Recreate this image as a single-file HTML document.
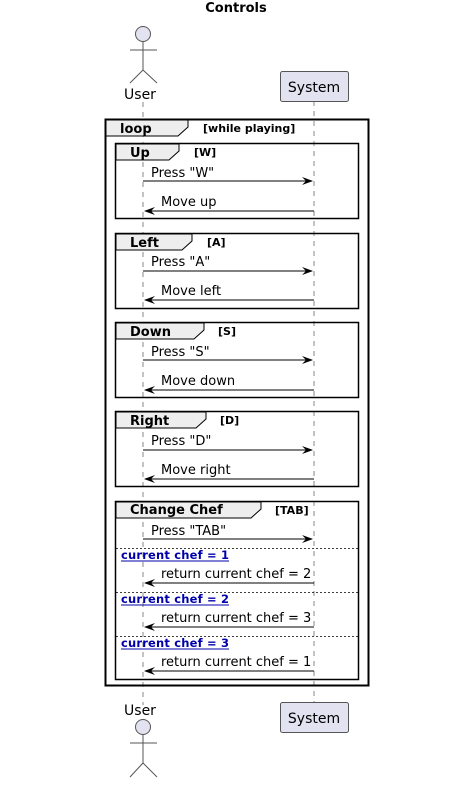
<!DOCTYPE html>
<html><head><meta charset="utf-8"><style>html,body{margin:0;padding:0;background:#fff}svg{display:block}</style></head><body>
<svg width="449" height="785" viewBox="0 0 449 785" xmlns="http://www.w3.org/2000/svg" font-family="'DejaVu Sans', 'Liberation Sans', sans-serif">
<rect width="449" height="785" fill="#fff"/>
<text x="236" y="12" text-anchor="middle" font-weight="bold" font-size="13">Controls</text>
<line x1="143" y1="102" x2="143" y2="705" stroke="#555" stroke-dasharray="5,5" stroke-width="0.7"/>
<line x1="314" y1="101" x2="314" y2="702" stroke="#555" stroke-dasharray="5,5" stroke-width="0.7"/>
<g stroke="#555" fill="none" stroke-width="1">
<circle cx="143" cy="34" r="7.5" fill="#E2E2F0"/>
<line x1="143" y1="42" x2="143" y2="70"/><line x1="130" y1="50" x2="157" y2="50"/>
<line x1="143" y1="70" x2="130" y2="83"/><line x1="143" y1="70" x2="157" y2="83"/>
</g>
<text x="140" y="99" text-anchor="middle" font-size="14">User</text>
<rect x="280.5" y="71.5" width="68" height="30" rx="2" fill="#E2E2F0" stroke="#555"/>
<text x="314" y="92" text-anchor="middle" font-size="14">System</text>
<rect x="105.5" y="119.5" width="263" height="566" fill="none" stroke="#000" stroke-width="2"/>
<polygon points="106,120 188,120 188,127 178,136 106,136" fill="#EEE" stroke="#000" stroke-width="1"/>
<text x="120" y="133" font-weight="bold" font-size="13">loop</text>
<text x="203" y="132" font-weight="bold" font-size="11">[while playing]</text>
<g>
<rect x="115.5" y="143.5" width="243" height="75" fill="none" stroke="#000" stroke-width="1.5"/>
<polygon points="116,144 179,144 179,151 169,160 116,160" fill="#EEE" stroke="#000"/>
<text x="130" y="157" font-weight="bold" font-size="13">Up</text>
<text x="194" y="156" font-weight="bold" font-size="11">[W]</text>
<text x="151" y="177" font-size="13">Press "W"</text>
<line x1="143" y1="181" x2="312" y2="181" stroke="#000"/><path d="M302,177 L313,181 L302,185 L306,181Z" fill="#000"/>
<text x="161" y="206" font-size="13">Move up</text>
<line x1="145" y1="211" x2="314" y2="211" stroke="#000"/><path d="M155,207 L144,211 L155,215 L151,211Z" fill="#000"/>
</g>
<g>
<rect x="115.5" y="233.5" width="243" height="75" fill="none" stroke="#000" stroke-width="1.5"/>
<polygon points="116,234 192,234 192,241 182,250 116,250" fill="#EEE" stroke="#000"/>
<text x="130" y="247" font-weight="bold" font-size="13">Left</text>
<text x="207" y="246" font-weight="bold" font-size="11">[A]</text>
<text x="151" y="266" font-size="13">Press "A"</text>
<line x1="143" y1="271" x2="312" y2="271" stroke="#000"/><path d="M302,267 L313,271 L302,275 L306,271Z" fill="#000"/>
<text x="161" y="295" font-size="13">Move left</text>
<line x1="145" y1="300" x2="314" y2="300" stroke="#000"/><path d="M155,296 L144,300 L155,304 L151,300Z" fill="#000"/>
</g>
<g>
<rect x="115.5" y="322.5" width="243" height="75" fill="none" stroke="#000" stroke-width="1.5"/>
<polygon points="116,323 204,323 204,330 194,339 116,339" fill="#EEE" stroke="#000"/>
<text x="130" y="336" font-weight="bold" font-size="13">Down</text>
<text x="218" y="335" font-weight="bold" font-size="11">[S]</text>
<text x="151" y="356" font-size="13">Press "S"</text>
<line x1="143" y1="360" x2="312" y2="360" stroke="#000"/><path d="M302,356 L313,360 L302,364 L306,360Z" fill="#000"/>
<text x="161" y="385" font-size="13">Move down</text>
<line x1="145" y1="390" x2="314" y2="390" stroke="#000"/><path d="M155,386 L144,390 L155,394 L151,390Z" fill="#000"/>
</g>
<g>
<rect x="115.5" y="411.5" width="243" height="75" fill="none" stroke="#000" stroke-width="1.5"/>
<polygon points="116,412 206,412 206,419 196,428 116,428" fill="#EEE" stroke="#000"/>
<text x="130" y="425" font-weight="bold" font-size="13">Right</text>
<text x="220" y="424" font-weight="bold" font-size="11">[D]</text>
<text x="151" y="445" font-size="13">Press "D"</text>
<line x1="143" y1="450" x2="312" y2="450" stroke="#000"/><path d="M302,446 L313,450 L302,454 L306,450Z" fill="#000"/>
<text x="161" y="474" font-size="13">Move right</text>
<line x1="145" y1="479" x2="314" y2="479" stroke="#000"/><path d="M155,475 L144,479 L155,483 L151,479Z" fill="#000"/>
</g>
<g>
<rect x="115.5" y="501.5" width="243" height="178" fill="none" stroke="#000" stroke-width="1.5"/>
<polygon points="116,502 261,502 261,509 251,518 116,518" fill="#EEE" stroke="#000"/>
<text x="130" y="514" font-weight="bold" font-size="13">Change Chef</text>
<text x="275" y="514" font-weight="bold" font-size="11">[TAB]</text>
<text x="151" y="535" font-size="13">Press "TAB"</text>
<line x1="143" y1="539" x2="312" y2="539" stroke="#000"/><path d="M302,535 L313,539 L302,543 L306,539Z" fill="#000"/>
<line x1="116" y1="548.5" x2="358" y2="548.5" stroke="#000" stroke-dasharray="2,2" stroke-width="0.8"/>
<text x="121" y="559" font-weight="bold" font-size="11.5" fill="#0000AA" textLength="108">current chef = 1</text>
<line x1="121" y1="561" x2="229" y2="561" stroke="#0000AA"/>
<text x="161" y="578" font-size="13">return current chef = 2</text>
<line x1="145" y1="583" x2="314" y2="583" stroke="#000"/><path d="M155,579 L144,583 L155,587 L151,583Z" fill="#000"/>
<line x1="116" y1="592.5" x2="358" y2="592.5" stroke="#000" stroke-dasharray="2,2" stroke-width="0.8"/>
<text x="121" y="603" font-weight="bold" font-size="11.5" fill="#0000AA" textLength="108">current chef = 2</text>
<line x1="121" y1="605" x2="229" y2="605" stroke="#0000AA"/>
<text x="161" y="622" font-size="13">return current chef = 3</text>
<line x1="145" y1="627" x2="314" y2="627" stroke="#000"/><path d="M155,623 L144,627 L155,631 L151,627Z" fill="#000"/>
<line x1="116" y1="636.5" x2="358" y2="636.5" stroke="#000" stroke-dasharray="2,2" stroke-width="0.8"/>
<text x="121" y="647" font-weight="bold" font-size="11.5" fill="#0000AA" textLength="108">current chef = 3</text>
<line x1="121" y1="649" x2="229" y2="649" stroke="#0000AA"/>
<text x="161" y="666" font-size="13">return current chef = 1</text>
<line x1="145" y1="671" x2="314" y2="671" stroke="#000"/><path d="M155,667 L144,671 L155,675 L151,671Z" fill="#000"/>
</g>
<text x="140" y="715" text-anchor="middle" font-size="14">User</text>
<g stroke="#555" fill="none" stroke-width="1">
<circle cx="143" cy="727" r="7.5" fill="#E2E2F0"/>
<line x1="143" y1="735" x2="143" y2="763"/><line x1="130" y1="743" x2="157" y2="743"/>
<line x1="143" y1="763" x2="130" y2="777"/><line x1="143" y1="763" x2="157" y2="777"/>
</g>
<rect x="280.5" y="702.5" width="68" height="30" rx="2" fill="#E2E2F0" stroke="#555"/>
<text x="314" y="723" text-anchor="middle" font-size="14">System</text>
</svg>
</body></html>
